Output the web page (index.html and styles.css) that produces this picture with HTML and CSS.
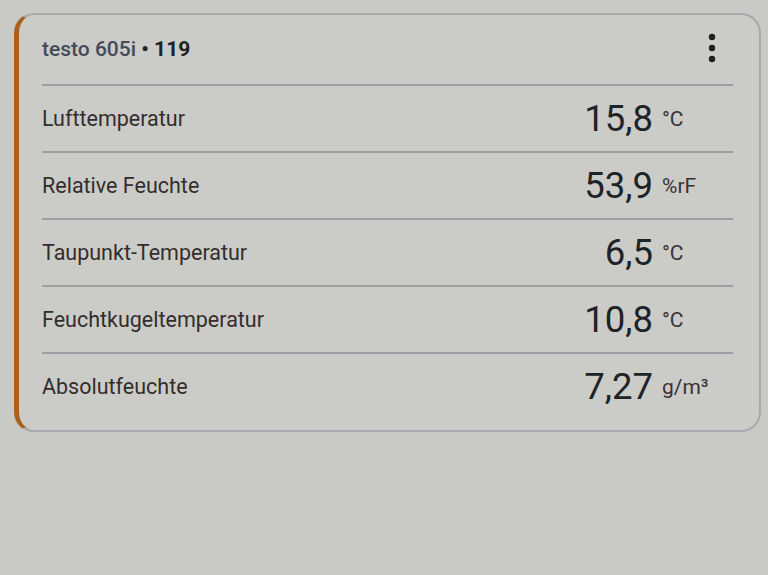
FILE: index.html
```html
<!DOCTYPE html>
<html lang="de">
<head>
<meta charset="utf-8">
<link rel="stylesheet" href="styles.css">
</head>
<body>
<div class="card">
  <div class="header">
    <div class="title"><span class="model">testo 605i</span> <span class="serial">• 119</span></div>
    <svg class="kebab" width="24" height="30" viewBox="0 0 24 30">
      <circle cx="12" cy="4" r="3.2"/>
      <circle cx="12" cy="15" r="3.2"/>
      <circle cx="12" cy="26" r="3.2"/>
    </svg>
  </div>
  <div class="row"><span class="label">Lufttemperatur</span><span class="value">15,8</span><span class="unit">°C</span></div>
  <div class="row"><span class="label">Relative Feuchte</span><span class="value">53,9</span><span class="unit">%rF</span></div>
  <div class="row"><span class="label">Taupunkt-Temperatur</span><span class="value">6,5</span><span class="unit">°C</span></div>
  <div class="row"><span class="label">Feuchtkugeltemperatur</span><span class="value">10,8</span><span class="unit">°C</span></div>
  <div class="row last"><span class="label">Absolutfeuchte</span><span class="value">7,27</span><span class="unit">g/m³</span></div>
</div>
</body>
</html>
```
FILE: styles.css
```css
html, body {
  margin: 0;
  padding: 0;
  background: #c9cac5;
  font-family: Roboto, "Liberation Sans", sans-serif;
}
body {
  width: 768px;
  height: 575px;
  overflow: hidden;
}
.card {
  box-sizing: border-box;
  margin: 13px 0 0 14px;
  width: 747px;
  height: 419px;
  background: #cbccc8;
  border: 2px solid #a9a8ae;
  border-left: 5px solid #a8601c;
  border-radius: 20px;
  padding: 0 26px 0 23px;
}
.header {
  height: 69px;
  display: flex;
  align-items: center;
  justify-content: space-between;
}
.title {
  font-size: 21px;
  font-weight: 500;
  margin-top: -2px;
}
.model { color: #434a58; }
.serial { color: #1f2224; font-weight: 700; }
.kebab {
  fill: #1d1f21;
  margin-right: 9px;
  margin-top: -3px;
}
.row {
  display: grid;
  grid-template-columns: 1fr auto 71px;
  column-gap: 9px;
  align-items: center;
  height: 67px;
  box-sizing: border-box;
  border-top: 2px solid #9e9da4;
}
.label {
  font-size: 21.5px;
  color: #342d2d;
}
.value {
  font-size: 36.5px;
  color: #1d2326;
  text-align: right;
}
.unit {
  font-size: 21px;
  color: #3a3232;
}
```
